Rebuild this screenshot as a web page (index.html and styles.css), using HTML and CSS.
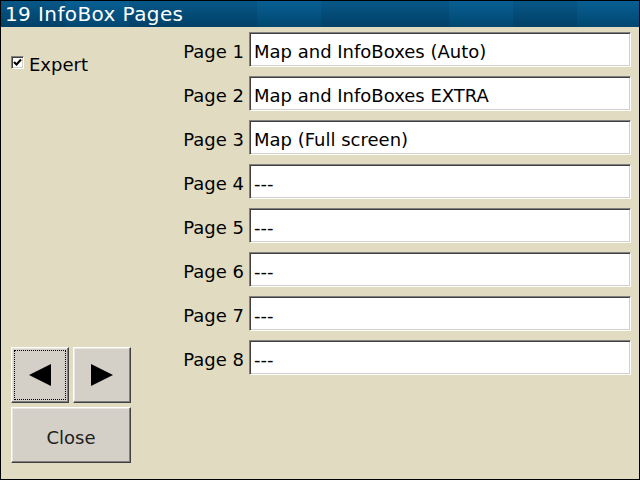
FILE: index.html
```html
<!DOCTYPE html>
<html>
<head>
<meta charset="utf-8">
<link rel="stylesheet" href="styles.css">
</head>
<body>
<div class="window">
  <div class="titlebar">19 InfoBox Pages</div>
  <div class="content">
    <div class="side">
      <div class="expert">
        <span class="checkbox">
          <svg width="9" height="9" viewBox="0 0 9 9"><path d="M1 4 L3.5 6.5 L8 1.5" fill="none" stroke="#000" stroke-width="2"/></svg>
        </span>
        <span>Expert</span>
      </div>
      <div class="buttons">
        <div class="arrows">
          <div class="btn focus">
            <svg width="22" height="22" viewBox="0 0 22 22"><path d="M0 11 L22 0 L22 22 Z" fill="#000"/></svg>
          </div>
          <div class="btn">
            <svg width="22" height="22" viewBox="0 0 22 22"><path d="M22 11 L0 0 L0 22 Z" fill="#000"/></svg>
          </div>
        </div>
        <div class="btn close">Close</div>
      </div>
    </div>
    <div class="pages">
      <div class="label">Page 1</div><div class="field">Map and InfoBoxes (Auto)</div>
      <div class="label">Page 2</div><div class="field">Map and InfoBoxes EXTRA</div>
      <div class="label">Page 3</div><div class="field">Map (Full screen)</div>
      <div class="label">Page 4</div><div class="field">---</div>
      <div class="label">Page 5</div><div class="field">---</div>
      <div class="label">Page 6</div><div class="field">---</div>
      <div class="label">Page 7</div><div class="field">---</div>
      <div class="label">Page 8</div><div class="field">---</div>
    </div>
  </div>
</div>
</body>
</html>
```
FILE: styles.css
```css
html, body {
  margin: 0;
  padding: 0;
}
body {
  font-family: "DejaVu Sans", sans-serif;
  font-size: 18px;
  color: #000;
}
.window {
  width: 640px;
  height: 480px;
  box-sizing: border-box;
  border: 1px solid #000;
  background: #e1dcc1;
  display: flex;
  flex-direction: column;
}
.titlebar {
  height: 26px;
  box-sizing: border-box;
  padding: 1px 0 0 4px;
  line-height: 25px;
  font-size: 20px;
  letter-spacing: 0.4px;
  color: #fff;
  background:
    linear-gradient(to bottom, rgba(255,255,255,0.03), rgba(0,0,0,0.22)),
    linear-gradient(to right,
      #005284 0 64px, #005a90 64px 128px, #005284 128px 256px, #005a90 256px 320px,
      #005284 320px 448px, #005a90 448px 512px, #005284 512px 576px, #005a90 576px);
}
.content {
  flex: 1;
  display: flex;
}
.side {
  width: 140px;
  box-sizing: border-box;
  padding: 27px 0 16px 10px;
  display: flex;
  flex-direction: column;
  justify-content: space-between;
}
.expert {
  display: flex;
  align-items: flex-start;
  line-height: normal;
}
.checkbox {
  width: 13px;
  height: 13px;
  box-sizing: border-box;
  margin: 2px 5px 0 0;
  background: #fff;
  border: 1px solid;
  border-color: #808080 #fff #fff #808080;
  box-shadow: inset 1px 1px #404040, inset -1px -1px #d4d0c8;
  display: flex;
  align-items: center;
  justify-content: center;
}
.buttons {
  display: flex;
  flex-direction: column;
  gap: 4px;
  width: 120px;
}
.arrows {
  display: flex;
  gap: 4px;
}
.btn {
  height: 56px;
  box-sizing: border-box;
  background: #d4d0c8;
  border: 1px solid;
  border-color: #fff #404040 #404040 #fff;
  box-shadow: inset -1px -1px #808080, inset 1px 1px #e8e6e0;
  display: flex;
  align-items: center;
  justify-content: center;
  color: #202020;
}
.arrows .btn {
  width: 58px;
}
.btn.focus {
  outline: 1px dotted #000;
  outline-offset: -4px;
}
.close {
  width: 120px;
  padding-top: 4px;
}
.pages {
  flex: 1;
  box-sizing: border-box;
  padding: 5px 8px 0 0;
  display: grid;
  grid-template-columns: auto 382px;
  grid-auto-rows: 35px;
  justify-content: end;
  column-gap: 5px;
  row-gap: 9px;
  align-content: start;
}
.label {
  display: flex;
  align-items: flex-end;
  padding-bottom: 5px;
}
.field {
  box-sizing: border-box;
  height: 35px;
  padding: 0 4px 4px;
  display: flex;
  align-items: flex-end;
  background: #fff;
  border: 1px solid;
  border-color: #808080 #fff #fff #808080;
  box-shadow: inset 1px 1px #404040, inset -1px -1px #d4d0c8;
  white-space: nowrap;
}
```
